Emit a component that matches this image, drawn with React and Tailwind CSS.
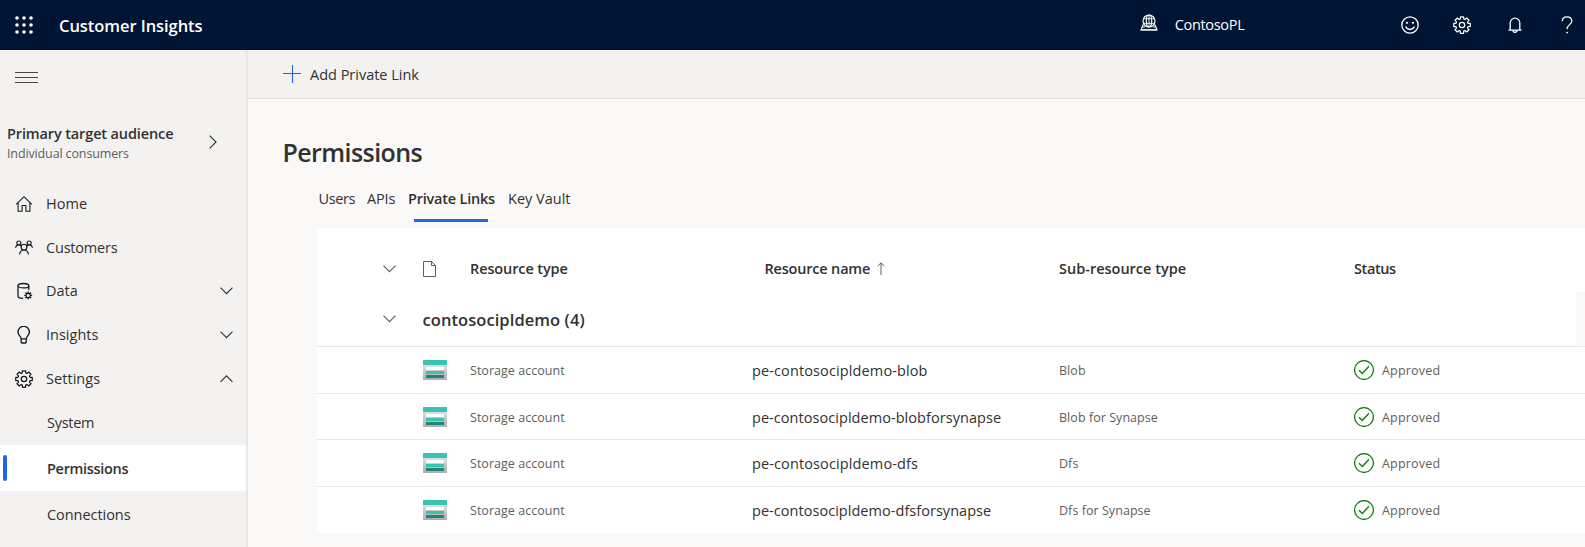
import React from "react";

// Outline of an eight-toothed gear centred on (cx, cy).
function gearPath(cx, cy, outer, inner, dip) {
  const point = (radius, degrees) => {
    const a = (degrees * Math.PI) / 180;
    return `${(cx + radius * Math.cos(a)).toFixed(2)} ${(cy + radius * Math.sin(a)).toFixed(2)}`;
  };
  let d = "";
  for (let i = 0; i < 8; i++) {
    const a = i * 45;
    d += `${i === 0 ? "M" : "L"}${point(inner, a - 15)}L${point(outer, a - 11)}L${point(outer, a + 11)}L${point(inner, a + 15)}`;
    d += `Q${point(inner - dip, a + 22.5)} ${point(inner, a + 30)}`;
  }
  return d + "Z";
}

function Icon({ children, className = "size-[18px]", box = "0 0 18 18" }) {
  return (
    <svg viewBox={box} className={`${className} shrink-0`} fill="none" stroke="currentColor" strokeWidth="1.15">
      {children}
    </svg>
  );
}

const GEAR = gearPath(9, 9, 8.4, 6.6, 1.1);
const SMALL_GEAR = gearPath(13.2, 13.4, 4, 2.7, 0);

const GearIcon = () => (
  <Icon>
    <path d={GEAR} strokeLinejoin="round" strokeWidth="1.25" />
    <circle cx="9" cy="9" r="2.7" strokeWidth="1.25" />
  </Icon>
);

const WaffleIcon = () => (
  <Icon>
    {[2, 9, 16].map((y) =>
      [2, 9, 16].map((x) => <circle key={`${x}-${y}`} cx={x} cy={y} r="1.8" fill="currentColor" stroke="none" />)
    )}
  </Icon>
);

const GlobeIcon = () => (
  <Icon>
    <circle cx="9" cy="7" r="6" />
    <ellipse cx="9" cy="7" rx="2.7" ry="6" />
    <path d="M9 1v12M3.6 4.7h10.8M3.6 9.3h10.8" strokeWidth=".9" />
    <path d="M3.2 10.5L1.2 15.4M14.8 10.5l2 4.9M2 13h3M13 13h3" />
    <path d="M.5 15.9h17" strokeWidth="1.6" />
  </Icon>
);

const SmileIcon = () => (
  <Icon>
    <circle cx="9" cy="9" r="8.2" strokeWidth="1.3" />
    <circle cx="6" cy="6.8" r="1.1" fill="currentColor" stroke="none" />
    <circle cx="12" cy="6.8" r="1.1" fill="currentColor" stroke="none" />
    <path d="M4.6 10.6a4.8 4.8 0 0 0 8.8 0" strokeWidth="1.3" />
  </Icon>
);

const BellIcon = () => (
  <Icon>
    <path d="M2.5 14.2h13M4.2 14.2V7a4.8 4.8 0 0 1 9.6 0v7.2" strokeWidth="1.3" />
    <path d="M7 14.6a2 1.8 0 0 0 4 0" strokeWidth="1.3" />
  </Icon>
);

const HelpIcon = () => (
  <Icon>
    <path d="M4.3 5.3C4.3 2.6 6.3.9 9 .9s4.800 1.600 4.800 4.200c0 3.200-4.700 4-4.700 7.600v.6" strokeWidth="1.25" />
    <circle cx="9.1" cy="16.6" r=".9" fill="currentColor" stroke="none" />
  </Icon>
);

const HomeIcon = () => (
  <Icon>
    <path d="M1.2 9.3L9 1.7l7.800 7.600M3.100 7.600v8.700h4V10.500h3.800v5.800h4V7.600" strokeWidth="1.1" />
  </Icon>
);

const CustomersIcon = () => (
  <Icon>
    <circle cx="9" cy="8.1" r="2.9" />
    <path d="M4.600 15.500c.2-2.600 1.800-4.500 4.400-4.500s4.200 1.900 4.400 4.500" />
    <circle cx="3.8" cy="4" r="2" />
    <circle cx="14.2" cy="4" r="2" />
    <path d="M.6 8.700C.8 7.100 2 6 3.800 6c1 0 1.900.4 2.500 1M17.400 8.700c-.2-1.600-1.400-2.700-3.200-2.700-1 0-1.900.4-2.500 1" />
  </Icon>
);

const DataIcon = () => (
  <Icon>
    <ellipse cx="8.4" cy="3.7" rx="5.400" ry="2.200" strokeWidth="1.3" />
    <path d="M3 3.700v10.400c0 1.300 2.200 2.200 5.200 2.200M13.800 3.700v4.300" strokeWidth="1.3" />
    <path d={SMALL_GEAR} fill="currentColor" stroke="none" />
    <circle cx="13.2" cy="13.4" r="1.5" fill="#f3f2f1" stroke="none" />
  </Icon>
);

const BulbIcon = () => (
  <Icon>
    <path d="M6.200 12.900C6.200 10.200 3 9.300 3 6.100a5.700 5.700 0 0 1 11.400 0c0 3.200-3.200 4.100-3.200 6.800zM6.200 12.900v3.300c0 .5.3.8.8.8h3.400c.5 0 .8-.3.8-.8v-3.300" strokeWidth="1.35" />
  </Icon>
);

const CHEVRONS = {
  down: "M.5 .7L6.500 6.700L12.500 .7",
  up: "M.5 6.800L6.500 .8L12.500 6.800",
};

const Chevron = ({ direction = "down" }) => (
  <Icon className="h-[8px] w-[13px]" box="0 0 13 8">
    <path d={CHEVRONS[direction]} />
  </Icon>
);

const StorageIcon = () => (
  <svg viewBox="0 0 24 20" className="h-[20px] w-[24px] shrink-0">
    <defs>
      <linearGradient id="storage-body" x1="0" y1="0" x2="0" y2="1">
        <stop offset="0" stopColor="#e2e2e2" />
        <stop offset="1" stopColor="#adadad" />
      </linearGradient>
    </defs>
    <rect y="4" width="24" height="16" rx=".5" fill="url(#storage-body)" />
    <rect width="24" height="5" rx=".5" fill="#37c2b1" />
    <rect x="3" y="7" width="18" height="3" fill="#fff" />
    <rect x="3" y="11" width="18" height="3" fill="#37c2b1" />
    <rect x="3" y="15" width="18" height="3" fill="#258277" />
  </svg>
);

const ApprovedIcon = () => (
  <svg viewBox="0 0 20 20" className="size-[20px] shrink-0" fill="none" stroke="#107c10">
    <circle cx="10" cy="10" r="9.4" strokeWidth="1.25" />
    <path d="M5 10.200l3.300 3.200L15 6.300" strokeWidth="1.4" />
  </svg>
);

function NavItem({ icon, label, tracking, chevron }) {
  return (
    <div className="flex h-[43.8px] items-center pr-[13px] pl-[15px]">
      <span className="text-[#1b1a19]">{icon}</span>
      <span className={`ml-[13px] flex-1 ${tracking}`}>{label}</span>
      {chevron && <Chevron direction={chevron} />}
    </div>
  );
}

const ROWS = [
  { name: "pe-contosocipldemo-blob", type: "Blob", height: "h-[47px]", tracking: "tracking-[0.12px]" },
  { name: "pe-contosocipldemo-blobforsynapse", type: "Blob for Synapse", height: "h-[46px]", tracking: "tracking-[0.05px]" },
  { name: "pe-contosocipldemo-dfs", type: "Dfs", height: "h-[47px]", tracking: "tracking-[0.12px]" },
  { name: "pe-contosocipldemo-dfsforsynapse", type: "Dfs for Synapse", height: "h-[47px]", tracking: "tracking-[0.04px]" },
];

const GRID = "grid grid-cols-[105.5px_47.5px_282px_306px_295px_1fr] items-center";

export default function App() {
  return (
    <div className="flex h-[547px] flex-col overflow-hidden bg-[#faf9f8] font-['Open_Sans','Noto_Sans',sans-serif] text-[14.5px] leading-5 text-[#323130]">
      <header className="flex h-[50px] shrink-0 items-center bg-[#001433] pr-[9px] pl-[15px] text-white">
        <WaffleIcon />
        <h1 className="ml-[26px] flex-1 pt-[2px] text-[16.5px] font-semibold tracking-[-0.06px]">Customer Insights</h1>
        <div className="mr-[156px] flex items-center">
          <span className="-mt-1"><GlobeIcon /></span>
          <span className="ml-[17px] tracking-[-0.3px]">ContosoPL</span>
        </div>
        <div className="flex gap-[34.5px]">
          <SmileIcon />
          <GearIcon />
          <BellIcon />
          <HelpIcon />
        </div>
      </header>

      <div className="flex min-h-0 flex-1">
        <aside className="w-[248px] shrink-0 border-r-2 border-[#e9e8e7] bg-[#f3f2f1]">
          <div className="flex h-[54px] items-center pt-[2px] pl-[15px] text-[#484644]">
            <Icon className="h-[12px] w-[23px]" box="0 0 23 12">
              <path d="M0 .5h23M0 5.500h23M0 10.500h23" strokeWidth="1" />
            </Icon>
          </div>
          <div className="flex h-[78px] items-center pr-[29px] pl-[7px]">
            <div className="flex-1 pt-[2px]">
              <div className="font-semibold tracking-[-0.13px]">Primary target audience</div>
              <div className="text-[12.5px] tracking-[-0.13px] text-[#605e5c]">Individual consumers</div>
            </div>
            <Icon className="mb-[3px] h-[14px] w-[8px]" box="0 0 8 14">
              <path d="M.7 .7L7 7L.7 13.300" />
            </Icon>
          </div>
          <nav>
            <NavItem icon={<HomeIcon />} label="Home" tracking="tracking-[0.05px]" />
            <NavItem icon={<CustomersIcon />} label="Customers" tracking="tracking-[-0.2px]" />
            <NavItem icon={<DataIcon />} label="Data" tracking="tracking-normal" chevron="down" />
            <NavItem icon={<BulbIcon />} label="Insights" tracking="tracking-normal" chevron="down" />
            <NavItem icon={<GearIcon />} label="Settings" tracking="tracking-[0.05px]" chevron="up" />
            <div className="flex h-[44px] items-center pl-[47px] tracking-[-0.29px]">System</div>
            <div className="flex h-[46px] items-center rounded-r-xs bg-white pl-[3px]">
              <span className="h-[26px] w-[4px] rounded-sm bg-[#2266e3]" />
              <span className="ml-[40px] pt-[2px] font-semibold tracking-[-0.31px]">Permissions</span>
            </div>
            <div className="flex h-[46px] items-center pt-[2px] pl-[47px] tracking-[-0.05px]">Connections</div>
          </nav>
        </aside>

        <main className="flex min-w-0 flex-1 flex-col">
          <div className="flex h-[49px] shrink-0 items-center border-b border-[#e1dfdd] bg-[#f3f2f1] pl-[35px]">
            <Icon className="size-[18px] text-[#2266e3]">
              <path d="M0 8.500h18M9.500 0v18" />
            </Icon>
            <span className="ml-[9px] pt-[2px] tracking-[-0.01px]">Add Private Link</span>
          </div>

          <h2 className="mt-[36px] ml-[34.5px] text-[25px] leading-[34px] font-semibold tracking-[-0.58px]">Permissions</h2>

          <div className="mt-[20px] ml-[70.5px] flex h-[39px] items-start">
            <span className="w-[48.5px] tracking-[-0.39px]">Users</span>
            <span className="w-[41px] tracking-[-0.15px]">APIs</span>
            <span className="flex w-[100px] flex-col">
              <span className="font-semibold tracking-[-0.22px]">Private Links</span>
              <span className="mt-[10px] ml-[6px] h-[3px] w-[74px] bg-[#2266e3]" />
            </span>
            <span>Key Vault</span>
          </div>

          <section className="ml-[69px] bg-white">
            <div className={`${GRID} h-[64px] pt-[17px] font-semibold`}>
              <span className="pl-[66px] text-[#605e5c]"><Chevron /></span>
              <span className="text-[#605e5c]">
                <Icon className="h-[16px] w-[13px]" box="0 0 13 16">
                  <path d="M.5 .5h8l4 4v11H.5zM8.500 .5v4h4" strokeWidth="1" />
                </Icon>
              </span>
              <span className="tracking-[-0.11px]">Resource type</span>
              <span className="flex items-center pl-[12.5px] tracking-[-0.19px]">
                Resource name
                <Icon className="ml-[6.5px] h-[13px] w-[8px] text-[#605e5c]" box="0 0 8 13">
                  <path d="M4 .8V13M.6 4.200L4 .8l3.400 3.400" strokeWidth="1" />
                </Icon>
              </span>
              <span className="pl-px tracking-normal">Sub-resource type</span>
              <span className="pl-px tracking-[-0.41px]">Status</span>
            </div>
            <div className="flex h-[54px]">
              <span className="w-[105.5px] pt-[23px] pl-[66px] text-[#605e5c]"><Chevron /></span>
              <span className="flex-1 pt-[18px] text-[16.5px] font-semibold tracking-[0.07px]">contosocipldemo (4)</span>
              <span className="h-[53px] w-[9px] bg-[#faf9f8]" />
            </div>
            {ROWS.map((row) => (
              <div
                key={row.name}
                className={`${GRID} ${row.height} border-t border-[#e8e7e6] text-[12.5px] text-[#605e5c]`}
              >
                <span />
                <StorageIcon />
                <span className="pt-[2px] tracking-[0.03px]">Storage account</span>
                <span className={`pt-[2px] text-[14.5px] text-[#323130] ${row.tracking}`}>{row.name}</span>
                <span className="pt-[2px] pl-px tracking-[0.05px]">{row.type}</span>
                <span className="flex items-center gap-[8px] pl-px tracking-[0.2px]">
                  <ApprovedIcon />
                  <span className="pt-[2px]">Approved</span>
                </span>
              </div>
            ))}
          </section>
        </main>
      </div>
    </div>
  );
}
